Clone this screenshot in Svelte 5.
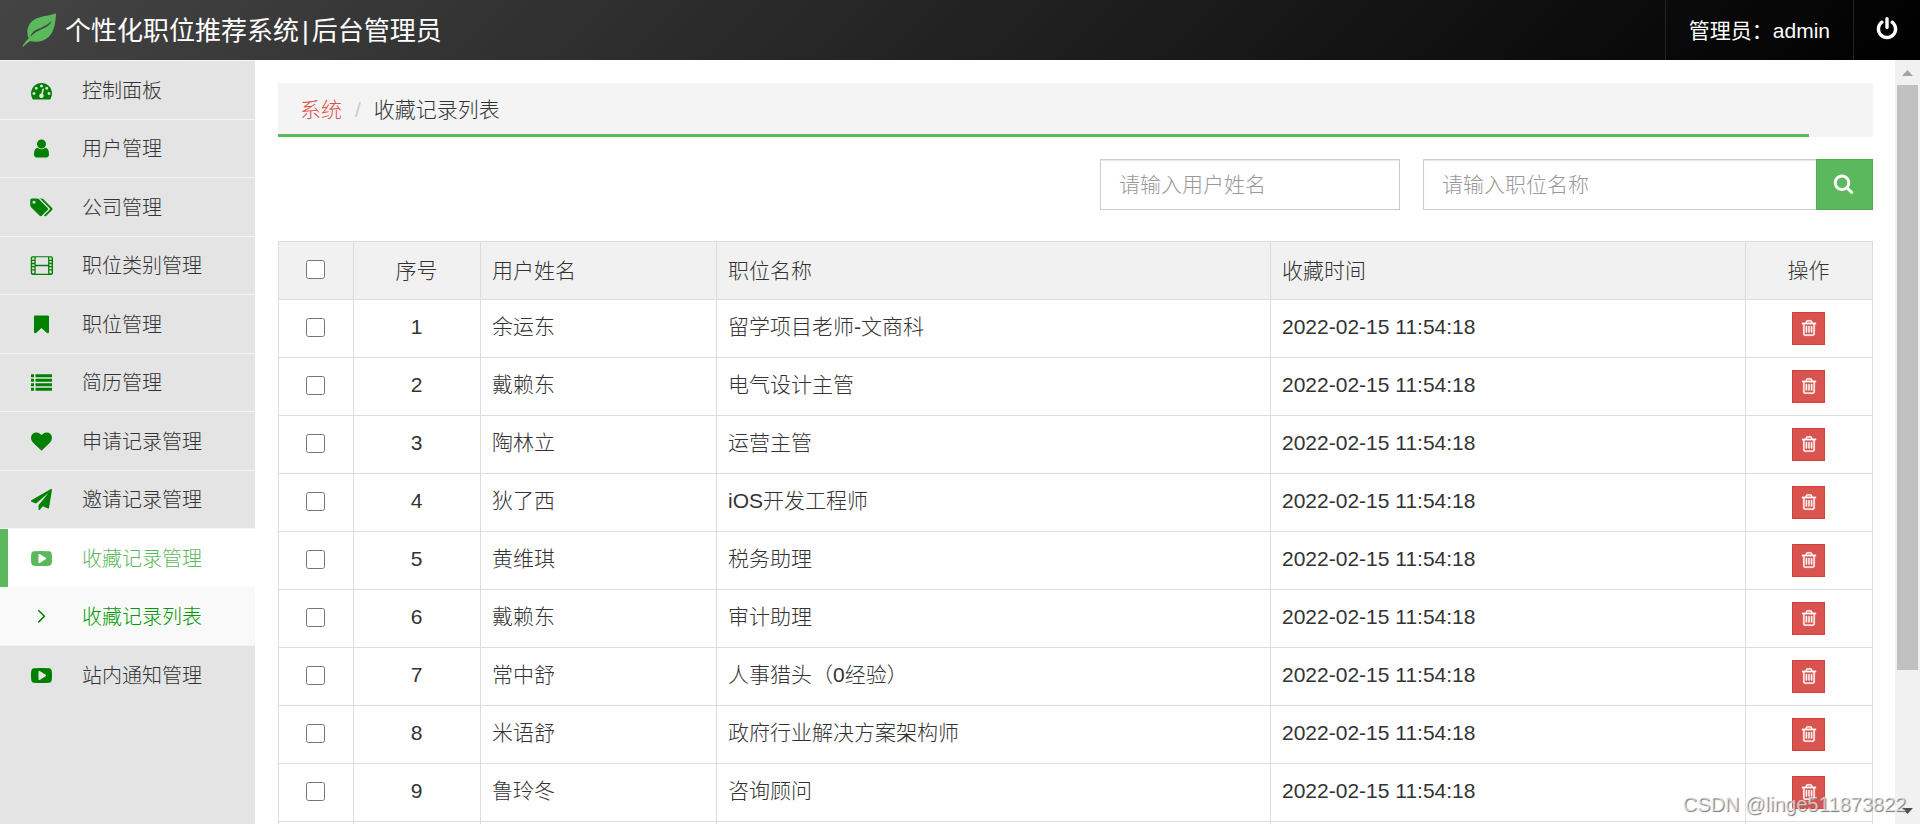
<script lang="ts">
    const icons = {
        leaf: 'M1790 10C1500 150 1130 120 780 280C420 445 240 760 290 1110Q300 1240 350 1330Q200 1480 20 1740L60 1780Q260 1600 430 1480C760 1570 1180 1500 1430 1240C1720 930 1770 480 1790 10zM1560 420C1440 740 1100 800 800 960Q610 1070 440 1260Q450 1120 620 980C860 780 1180 780 1560 420z',
        dashboard:
            'M384 1152q0-53-37.5-90.5t-90.5-37.5-90.5 37.5-37.5 90.5 37.5 90.5 90.5 37.5 90.5-37.5 37.5-90.5zm192-448q0-53-37.5-90.5t-90.5-37.5-90.5 37.5-37.5 90.5 37.5 90.5 90.5 37.5 90.5-37.5 37.5-90.5zm428 481l101-382q6-26-7.5-48.5t-38.5-29.5-48 6.5-30 39.5l-101 382q-60 5-107 43.5t-63 98.5q-20 77 20 146t117 89 146-20 89-117q16-60-6-117t-72-91zm660-33q0-53-37.5-90.5t-90.5-37.5-90.5 37.5-37.5 90.5 37.5 90.5 90.5 37.5 90.5-37.5 37.5-90.5zm-640-640q0-53-37.5-90.5t-90.5-37.5-90.5 37.5-37.5 90.5 37.5 90.5 90.5 37.5 90.5-37.5 37.5-90.5zm448 192q0-53-37.5-90.5t-90.5-37.5-90.5 37.5-37.5 90.5 37.5 90.5 90.5 37.5 90.5-37.5 37.5-90.5zm320 448q0 261-141 483-19 29-54 29h-1402q-35 0-54-29-141-221-141-483 0-182 71-348t191-286 286-191 348-71 348 71 286 191 191 286 71 348z',
        user: 'M1536 1399q0 109-62.5 187t-150.5 78h-854q-88 0-150.5-78t-62.5-187q0-85 8.5-160.5t31.5-152 58.5-131 94-89 134.5-34.5q131 128 313 128t313-128q76 0 134.5 34.5t94 89 58.5 131 31.5 152 8.5 160.5zm-256-887q0 159-112.5 271.5t-271.5 112.5-271.5-112.5-112.5-271.5 112.5-271.5 271.5-112.5 271.5 112.5 112.5 271.5z',
        tags: 'M384 448q0-53-37.5-90.5t-90.5-37.5-90.5 37.5-37.5 90.5 37.5 90.5 90.5 37.5 90.5-37.5 37.5-90.5zm1067 576q0 53-37 90l-491 492q-39 37-91 37-53 0-90-37l-715-716q-38-37-64.5-101t-26.5-117v-416q0-52 38-90t90-38h416q53 0 117 26.5t102 64.5l715 714q37 39 37 91zm384 0q0 53-37 90l-491 492q-39 37-91 37-36 0-59-14t-53-45l470-470q37-37 37-90 0-52-37-91l-715-714q-38-38-102-64.5t-117-26.5h224q53 0 117 26.5t102 64.5l715 714q37 39 37 91z',
        film: 'M128 96h1600q150 0 150 150v1300q0 150-150 150h-1600q-150 0-150-150v-1300q0-150 150-150zM100 220v180h190v-180zM100 510v160h190v-160zM100 780v160h190v-160zM100 1050v160h190v-160zM100 1320v240h190v-240zM400 200v640h1060v-640zM400 950v640h1060v-640zM1570 220v180h190v-180zM1570 510v160h190v-160zM1570 780v160h190v-160zM1570 1050v160h190v-160zM1570 1320v240h190v-240z',
        bookmark:
            'M1420 128q23 0 44 9 33 13 52.5 41t19.5 62v1289q0 34-19.5 62t-52.5 41q-19 8-44 8-48 0-83-32l-441-424-441 424q-36 33-83 33-23 0-44-9-33-13-52.5-41t-19.5-62v-1289q0-34 19.5-62t52.5-41q21-9 44-9h1048z',
        list: 'M0 192h256v256h-256zM384 192h1408v256h-1408zM0 576h256v256h-256zM384 576h1408v256h-1408zM0 960h256v256h-256zM384 960h1408v256h-1408zM0 1344h256v256h-256zM384 1344h1408v256h-1408z',
        heart: 'M896 1664q-26 0-44-18l-624-602q-10-8-27.5-26t-55.5-65.5-68-97.5-53.5-121-23.5-138q0-220 127-344t351-124q62 0 126.5 21.5t120 58 95.5 68.5 76 68q36-36 76-68t95.5-68.5 120-58 126.5-21.5q224 0 351 124t127 344q0 221-229 450l-623 600q-18 18-44 18z',
        plane: 'M1764 11q33 24 27 64l-256 1536q-5 29-32 45-14 8-31 8-11 0-24-5l-453-185-242 295q-18 23-49 23-13 0-22-4-19-7-30.5-23.5t-11.5-36.5v-349l864-1059-1069 925-395-162q-37-14-40-55-2-40 32-59l1664-960q15-9 32-9 20 0 36 11z',
        play: 'M1280 896q0-37-30-54l-512-320q-31-20-65-2-33 18-33 56v640q0 38 33 56 16 8 31 8 20 0 34-10l512-320q30-17 30-54zm512 0q0 96-1 150t-8.5 136.5-22.5 147.5q-16 73-69 123t-124 58q-222 25-671 25t-671-25q-71-8-124.5-58t-69.5-123q-14-65-21.5-147.5t-8.5-136.5-1-150 1-150 8.5-136.5 22.5-147.5q16-73 69-123t124-58q222-25 671-25t671 25q71 8 124.5 58t69.5 123q14 65 21.5 147.5t8.5 136.5 1 150z',
        angle: 'M580 410l90-90 560 560-560 560-90-90 470-470z',
        power: 'M1664 896q0 156-61 298t-164 245-245 164-298 61-298-61-245-164-164-245-61-298q0-182 80.5-343t226.5-270q43-32 95.5-25t83.5 50q32 42 24.5 94.5t-49.5 84.5q-98 74-151.5 181t-53.5 228q0 104 40.5 198.5t109.5 163.5 163.5 109.5 198.5 40.5 198.5-40.5 163.5-109.5 109.5-163.5 40.5-198.5q0-121-53.5-228t-151.5-181q-42-32-49.5-84.5t24.5-94.5q31-43 84-50t95 25q146 109 226.5 270t80.5 343zm-640-768v640q0 52-38 90t-90 38-90-38-38-90v-640q0-52 38-90t90-38 90 38 38 90z',
        search: 'M1216 832q0-185-131.5-316.5t-316.5-131.5-316.5 131.5-131.5 316.5 131.5 316.5 316.5 131.5 316.5-131.5 131.5-316.5zm512 832q0 52-38 90t-90 38q-54 0-90-38l-343-342q-179 124-399 124-143 0-273.5-55.5t-225-150-150-225-55.5-273.5 55.5-273.5 150-225 225-150 273.5-55.5 273.5 55.5 225 150 150 225 55.5 273.5q0 220-124 399l343 343q37 37 37 90z',
        trash: 'M704 736v576q0 14-9 23t-23 9h-64q-14 0-23-9t-9-23v-576q0-14 9-23t23-9h64q14 0 23 9t9 23zm256 0v576q0 14-9 23t-23 9h-64q-14 0-23-9t-9-23v-576q0-14 9-23t23-9h64q14 0 23 9t9 23zm256 0v576q0 14-9 23t-23 9h-64q-14 0-23-9t-9-23v-576q0-14 9-23t23-9h64q14 0 23 9t9 23zm128 724v-948h-896v948q0 22 7 40.5t14.5 27 10.5 8.5h832q3 0 10.5-8.5t14.5-27 7-40.5zm-672-1076h448l-48-117q-7-9-17-11h-317q-10 2-17 11zm928 32v64q0 14-9 23t-23 9h-96v948q0 83-47 143.5t-113 60.5h-832q-66 0-113-58.5t-47-141.5v-952h-96q-14 0-23-9t-9-23v-64q0-14 9-23t23-9h309l70-167q15-37 54-63t79-26h320q40 0 79 26t54 63l70 167h309q14 0 23 9t9 23z'
    };

    type IconName = keyof typeof icons;

    const menu: { icon: IconName; label: string; state?: string }[] = [
        { icon: 'dashboard', label: '控制面板' },
        { icon: 'user', label: '用户管理' },
        { icon: 'tags', label: '公司管理' },
        { icon: 'film', label: '职位类别管理' },
        { icon: 'bookmark', label: '职位管理' },
        { icon: 'list', label: '简历管理' },
        { icon: 'heart', label: '申请记录管理' },
        { icon: 'plane', label: '邀请记录管理' },
        { icon: 'play', label: '收藏记录管理', state: 'active' },
        { icon: 'angle', label: '收藏记录列表', state: 'sub' },
        { icon: 'play', label: '站内通知管理' }
    ];

    const time = '2022-02-15 11:54:18';
    const records = [
        { user: '余运东', job: '留学项目老师-文商科', time },
        { user: '戴赖东', job: '电气设计主管', time },
        { user: '陶林立', job: '运营主管', time },
        { user: '狄了西', job: 'iOS开发工程师', time },
        { user: '黄维琪', job: '税务助理', time },
        { user: '戴赖东', job: '审计助理', time },
        { user: '常中舒', job: '人事猎头（0经验）', time },
        { user: '米语舒', job: '政府行业解决方案架构师', time },
        { user: '鲁玲冬', job: '咨询顾问', time },
        { user: '', job: '', time: '' }
    ];

    let selected: boolean[] = $state(records.map(() => false));
    let userName = $state('');
    let jobName = $state('');

    function toggleAll(e: Event) {
        const checked = (e.target as HTMLInputElement).checked;
        selected = selected.map(() => checked);
    }
</script>

{#snippet icon(name: IconName)}
    <svg class="icon {name}" viewBox="0 0 1792 1792" aria-hidden="true">
        <path d={icons[name]} fill-rule="evenodd" />
    </svg>
{/snippet}

<div class="layout">
    <header>
        <h1>
            {@render icon('leaf')}
            <span class="title">个性化职位推荐系统<span class="bar">|</span>后台管理员</span>
        </h1>
        <div class="account">
            <span class="name">管理员：admin</span>
            <a class="logout" href="#logout" aria-label="退出">{@render icon('power')}</a>
        </div>
    </header>

    <div class="body">
        <nav>
            <ul>
                {#each menu as item}
                    <li>
                        <a href="#menu" class={item.state}>
                            {@render icon(item.icon)}
                            <span>{item.label}</span>
                        </a>
                    </li>
                {/each}
            </ul>
        </nav>

        <main>
            <div class="breadcrumb">
                <div class="crumbs">
                    <a href="#system">系统</a>
                    <span class="slash">/</span>
                    <span>收藏记录列表</span>
                </div>
                <div class="progress"></div>
            </div>

            <form onsubmit={(e) => e.preventDefault()}>
                <input type="text" placeholder="请输入用户姓名" aria-label="用户姓名" bind:value={userName} />
                <div class="group">
                    <input type="text" placeholder="请输入职位名称" aria-label="职位名称" bind:value={jobName} />
                    <button class="search-btn" aria-label="搜索">{@render icon('search')}</button>
                </div>
            </form>

            <table>
                <colgroup>
                    <col class="c-check" />
                    <col class="c-small" />
                    <col class="c-user" />
                    <col />
                    <col class="c-time" />
                    <col class="c-small" />
                </colgroup>
                <thead>
                    <tr>
                        <th class="center"><input type="checkbox" aria-label="全选" onchange={toggleAll} /></th>
                        <th class="center">序号</th>
                        <th>用户姓名</th>
                        <th>职位名称</th>
                        <th>收藏时间</th>
                        <th class="center">操作</th>
                    </tr>
                </thead>
                <tbody>
                    {#each records as record, i}
                        <tr>
                            <td class="center"><input type="checkbox" aria-label="选择" bind:checked={selected[i]} /></td>
                            <td class="center">{record.user ? i + 1 : ''}</td>
                            <td>{record.user}</td>
                            <td>{record.job}</td>
                            <td>{record.time}</td>
                            <td class="center">
                                <button class="delete" aria-label="删除">{@render icon('trash')}</button>
                            </td>
                        </tr>
                    {/each}
                </tbody>
            </table>
        </main>

        <div class="scrollbar">
            <svg viewBox="0 0 25 25"><path d="M7 16l5.500-6 5.500 6z" fill="#a3a3a3" /></svg>
            <div class="track"><div class="thumb"></div></div>
            <svg viewBox="0 0 25 25"><path d="M7 9l5.500 6 5.500-6z" fill="#505050" /></svg>
        </div>
    </div>

    <div class="watermark">CSDN @linge511873822</div>
</div>

<style>
    :global(body) {
        margin: 0;
        font-family: 'Liberation Sans', 'Noto Sans CJK SC', sans-serif;
        font-size: 21px;
        font-weight: 300;
        color: #333;
    }

    * {
        box-sizing: border-box;
    }

    a {
        text-decoration: none;
    }

    .icon {
        display: block;
        flex: none;
        width: 21px;
        height: 21px;
        fill: currentColor;
        overflow: visible;
    }

    .layout {
        position: relative;
        display: flex;
        flex-direction: column;
        height: 100vh;
        overflow: hidden;
    }

    header {
        display: flex;
        justify-content: space-between;
        flex: none;
        height: 60px;
        color: #fff;
        background: linear-gradient(135deg, #444, #000);
    }

    h1 {
        display: flex;
        align-items: center;
        gap: 9px;
        margin: 0;
        padding-left: 22px;
        font-size: 26px;
        font-weight: 400;
    }

    .title {
        padding-bottom: 3px;
    }

    .icon.leaf {
        width: 34px;
        height: 34px;
        color: #5cb85c;
    }

    .bar {
        margin: 0 3px;
    }

    .account {
        display: flex;
    }

    .name,
    .logout {
        display: flex;
        align-items: center;
        padding: 0 23px 3px;
        border-left: 1px solid #222;
        font-weight: 400;
        color: #fff;
    }

    .logout {
        padding: 0 21px 2px;
    }

    .icon.power {
        width: 24px;
        height: 24px;
    }

    .body {
        display: flex;
        flex: 1;
        min-height: 0;
    }

    nav {
        flex: none;
        width: 255px;
        background: #e4e4e4;
    }

    ul {
        margin: 0;
        padding: 0;
        list-style: none;
    }

    nav li {
        height: 58px;
        border-top: 1px solid #f5f5f5;
    }

    nav li:nth-child(odd) {
        height: 59px;
    }

    nav a {
        display: flex;
        align-items: center;
        gap: 30px;
        height: 100%;
        padding-left: 31px;
        font-size: 20px;
        color: #333;
    }

    nav span {
        padding-bottom: 2px;
    }

    nav .icon {
        color: #008000;
    }

    nav a.active {
        padding-left: 23px;
        border-left: 8px solid #5cb85c;
        background: #fff;
        color: #5cb85c;
    }

    nav a.active .icon {
        color: #5cb85c;
    }

    nav a.sub {
        background: #f9f9f9;
        color: #090;
    }

    main {
        flex: 1;
        min-width: 0;
        padding: 23px 22px 0 23px;
        overflow: hidden;
    }

    .breadcrumb {
        background: #f4f4f4;
    }

    .crumbs {
        display: flex;
        height: 51px;
        padding-left: 22px;
        line-height: 53px;
    }

    .crumbs a {
        color: #dd514c;
    }

    .slash {
        padding: 0 13px;
        color: #ccc;
    }

    .progress {
        width: 96%;
        height: 3px;
        background: #5cb85c;
    }

    form {
        display: flex;
        justify-content: flex-end;
        gap: 23px;
        margin: 22px 0 31px;
    }

    input[type='text'] {
        width: 300px;
        height: 51px;
        padding: 0 18px;
        border: 1px solid #ccc;
        border-radius: 0;
        box-shadow: inset 0 1px 1px rgba(0, 0, 0, 0.1);
        font: inherit;
    }

    input::placeholder {
        color: #999;
    }

    .group {
        display: flex;
        width: 450px;
    }

    .group input[type='text'] {
        flex: 1;
        min-width: 0;
        border-right: 0;
    }

    button {
        display: flex;
        align-items: center;
        justify-content: center;
        padding: 0 2px 2px 0;
        color: #fff;
    }

    .search-btn {
        width: 57px;
        border: 1px solid #4cae4c;
        background: #5cb85c;
    }

    table {
        width: 100%;
        border-collapse: collapse;
        table-layout: fixed;
    }

    .c-check {
        width: 75px;
    }

    .c-small {
        width: 127px;
    }

    .c-user {
        width: 236px;
    }

    .c-time {
        width: 475px;
    }

    th,
    td {
        height: 58px;
        padding: 12px 12px 0 11px;
        border: 1px solid #ddd;
        font-weight: 300;
        text-align: left;
        vertical-align: top;
        line-height: 29px;
    }

    th {
        background: #f1f1f1;
        line-height: 33px;
    }

    .center {
        text-align: center;
    }

    input[type='checkbox'] {
        display: block;
        width: 19px;
        height: 19px;
        margin: 6px auto 0;
    }

    .delete {
        width: 33px;
        height: 33px;
        margin: 0 auto;
        padding: 0 0 2px;
        border: 1px solid #d43f3a;
        background: #d9534f;
    }

    .icon.trash {
        width: 18px;
        height: 18px;
        stroke: currentColor;
        stroke-width: 30px;
    }

    .scrollbar {
        display: flex;
        flex-direction: column;
        flex: none;
        width: 25px;
        background: #f1f1f1;
    }

    .scrollbar svg {
        display: block;
        height: 25px;
    }

    .track {
        flex: 1;
        padding: 0 2px;
    }

    .thumb {
        height: 82%;
        background: #c1c1c1;
    }

    .watermark {
        position: absolute;
        right: 14px;
        bottom: 8px;
        font-size: 20px;
        line-height: 24px;
        color: rgba(255, 255, 255, 0.6);
        text-shadow: 1px 1px 1px #777;
    }
</style>
